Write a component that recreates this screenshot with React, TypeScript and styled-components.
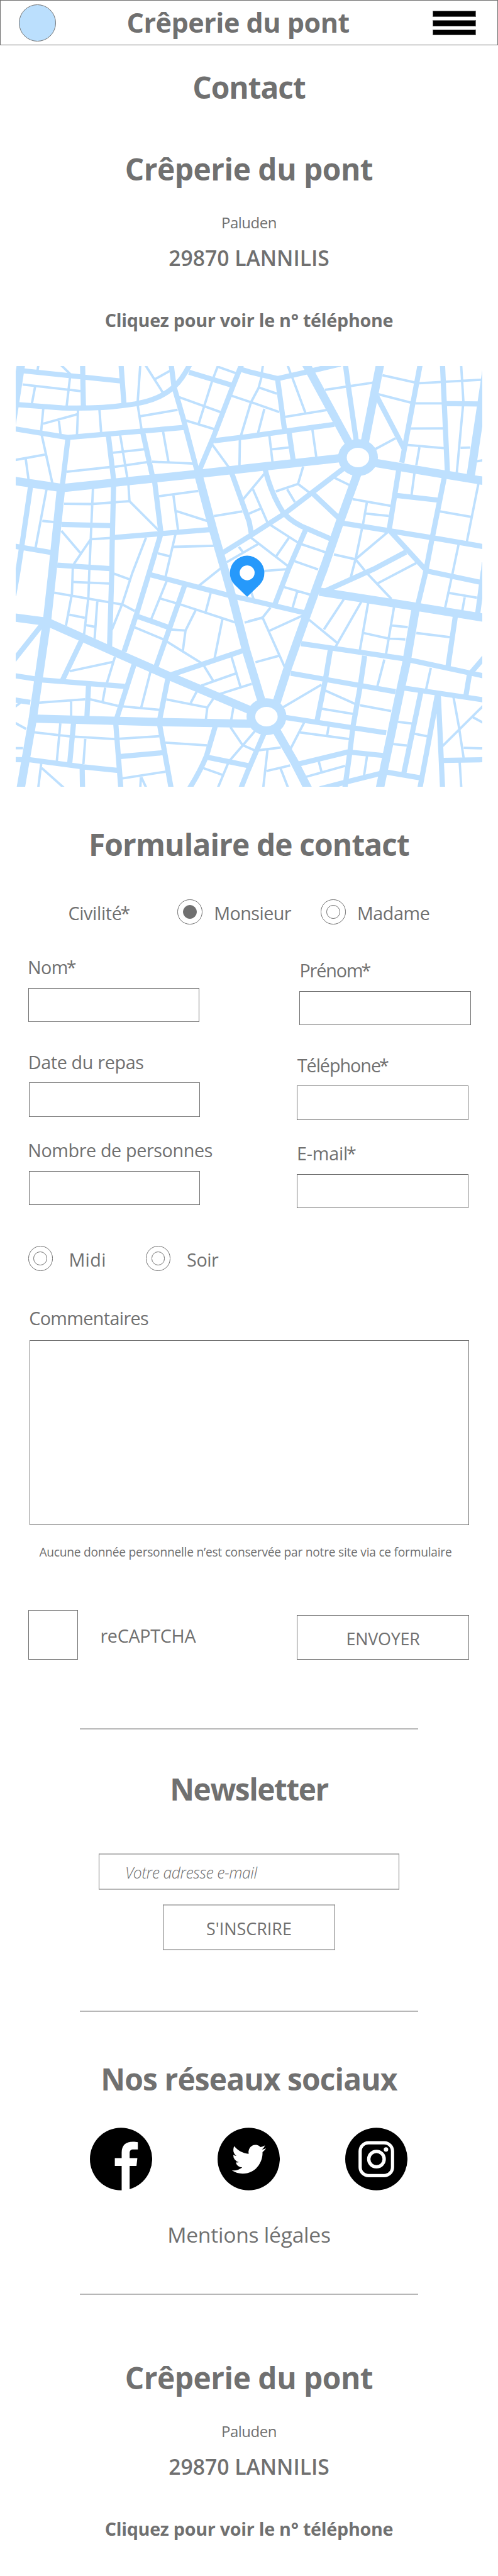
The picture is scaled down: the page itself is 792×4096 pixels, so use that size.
import React from "react";
import styled, { createGlobalStyle, css } from "styled-components";

const GREY = "#707070";
const LIGHT = "#b7b7b7";
const STREET = "#bee0fe";

const GlobalStyle = createGlobalStyle`
  *, *::before, *::after { box-sizing: border-box; }
  html, body { margin: 0; padding: 0; background: #fff; overflow: hidden; }
`;

const Page = styled.div`
  zoom: 0.9903;
  width: 799.7px;
  height: 4136px;
  display: flex;
  flex-direction: column;
  background: #fff;
  color: ${GREY};
  font-family: "Open Sans", "Noto Sans", sans-serif;
  white-space: nowrap;
`;

/* ---------- header ---------- */

const Header = styled.header`
  height: 73px;
  flex: none;
  border: 1px solid ${GREY};
  padding: 1px 34px 0 29px;
  display: flex;
  align-items: center;
  justify-content: space-between;
`;

const Logo = styled.div`
  width: 60px;
  height: 60px;
  border-radius: 50%;
  border: 1px solid ${GREY};
  background: #bbdffd;
`;

const Brand = styled.h1`
  margin: -1px 20px 0 0;
  font-size: 43.5px;
  line-height: 60px;
  font-weight: 700;
  letter-spacing: -0.49px;
`;

const Burger = styled.div`
  width: 70px;
  display: flex;
  flex-direction: column;
  gap: 5px;
`;

const BurgerBar = styled.span`
  height: 10px;
  background: #000;
  border: 1px solid ${GREY};
`;

/* ---------- typography ---------- */

type Spaced = { $top?: number; $track?: number };

const spaced = css<Spaced>`
  margin: ${(p) => p.$top ?? 0}px 0 -0.7px;
  padding-top: 0.7px;
  letter-spacing: ${(p) => p.$track ?? 0}px;
`;

const Heading = styled.h2<Spaced>`
  ${spaced}
  font-size: 48.3px;
  line-height: 60px;
  font-weight: 700;
  text-align: center;
`;

const Place = styled.p<Spaced>`
  ${spaced}
  font-size: 24.2px;
  line-height: 34px;
  text-align: center;
`;

const City = styled.p<Spaced>`
  ${spaced}
  font-size: 34px;
  line-height: 48px;
  font-weight: 600;
  text-align: center;
`;

const Phone = styled.p<Spaced>`
  ${spaced}
  font-size: 29px;
  line-height: 40px;
  font-weight: 700;
  text-align: center;
`;

const Legal = styled.p<Spaced>`
  ${spaced}
  font-size: 34px;
  line-height: 48px;
  text-align: center;
`;

const Notice = styled.p<Spaced>`
  ${spaced}
  padding-left: 63px;
  font-size: 19.4px;
  line-height: 28px;
`;

const Label = styled.label<Spaced & { $shift?: number }>`
  ${spaced}
  display: block;
  margin-left: ${(p) => (p.$shift ?? 0) + 1}px;
  font-size: 29px;
  line-height: 40px;
`;

const Star = styled.span`
  margin-left: -2px;
`;

const Divider = styled.hr<{ $top: number }>`
  width: 543px;
  height: 2px;
  flex: none;
  border: 0;
  margin: ${(p) => p.$top}px auto 0;
  background: ${LIGHT};
`;

/* ---------- map ---------- */

const MapFrame = styled.div`
  margin: 55.3px 25px 0;
  height: 675px;
  svg { display: block; width: 750px; height: 675px; }
`;

/* ---------- form ---------- */

const RadioRow = styled.div<{ $columns: string; $left: number; $top: number }>`
  margin-top: ${(p) => p.$top}px;
  padding-left: ${(p) => p.$left}px;
  height: 40px;
  display: grid;
  grid-template-columns: ${(p) => p.$columns};
`;

const Radio = styled.span`
  width: 40px;
  height: 40px;
  border: 1px solid ${GREY};
  border-radius: 50%;
  display: flex;
  align-items: center;
  justify-content: center;
`;

const RadioDot = styled.span<{ $on?: boolean }>`
  width: 22px;
  height: 22px;
  border: 1px solid ${GREY};
  border-radius: 50%;
  background: ${(p) => (p.$on ? GREY : "transparent")};
`;

const Fields = styled.div`
  margin-top: 48.4px;
  padding-left: 45px;
  display: grid;
  grid-template-columns: 432px 280px;
`;

const FieldColumn = styled.div<{ $top?: number }>`
  padding-top: ${(p) => p.$top ?? 0}px;
  display: flex;
  flex-direction: column;
`;

const Field = styled.div<{ $top?: number; $left?: number }>`
  margin: ${(p) => p.$top ?? 0}px 0 0 ${(p) => p.$left ?? 0}px;
  display: flex;
  flex-direction: column;
  gap: 13.6px;
`;

const TextBox = styled.div`
  width: 275px;
  height: 55px;
  border: 1px solid ${GREY};
`;

const CommentLabel = styled(Label)`
  margin: 54.7px 0 -0.7px 46.6px;
`;

const CommentBox = styled.div`
  flex: none;
  width: 706px;
  height: 297px;
  margin: 16.3px 0 0 47px;
  border: 1px solid ${GREY};
`;

const SubmitRow = styled.div`
  margin-top: 79.5px;
  padding: 0 46.7px 0 45px;
  height: 80px;
  display: flex;
  align-items: center;
`;

const CaptchaBox = styled.div`
  width: 80px;
  height: 80px;
  margin-right: 35px;
  border: 1px solid ${GREY};
`;

const Button = styled.button<{ $soft?: boolean; $track?: number }>`
  width: 276px;
  height: ${(p) => (p.$soft ? 73 : 72)}px;
  flex: none;
  padding: ${(p) => (p.$soft ? 5 : 4)}px 0 0;
  background: #fff;
  border: 1px solid ${GREY};
  ${(p) =>
    p.$soft &&
    css`
      border-top: 2.1px solid ${LIGHT};
      border-bottom: 2.1px solid ${LIGHT};
    `}
  color: ${GREY};
  font-family: inherit;
  font-size: 27.2px;
  line-height: 38px;
  letter-spacing: ${(p) => p.$track ?? 0}px;
`;

const Submit = styled(Button)`
  margin-left: auto;
  align-self: flex-end;
`;

const Newsletter = styled.div`
  margin-top: 74px;
  display: flex;
  flex-direction: column;
  align-items: center;
  gap: 24px;
`;

const MailBox = styled.div`
  width: 482px;
  height: 58px;
  padding: 4px 0 0 41px;
  display: flex;
  align-items: center;
  border: 1px solid ${GREY};
  border-top: 2.1px solid ${LIGHT};
  border-bottom: 2.1px solid ${LIGHT};
  font-size: 25px;
  line-height: 34px;
  font-style: italic;
  font-weight: 300;
  letter-spacing: -0.45px;
`;

const Socials = styled.div`
  margin-top: 48.2px;
  display: flex;
  justify-content: center;
  gap: 105px;
  svg { display: block; width: 100px; height: 101px; }
`;

/* ---------- map data: one list of streets per width, in four sheets ---------- */

type Sheet = { x: number; y: number; avenues: string; streets: string; lanes: string };

const sheets: Sheet[] = [
  {
    x: 0,
    y: 0,
    avenues:
      "M103 30L54 345 M60 606L300 642L950 574L1200 546L1700 491 M294 635L253 1035L227 1270L157 1755L97 2099 M950 560L960 595L1028 850L1083 1040L1119 1170L1184 1420L1257 1660L1283 1740",
    streets:
      "M100 76L580 126 M397 40L401 250 M582 40L597 245 M85 240L300 256Q480 260 600 243Q760 228 840 152Q880 115 917 40 M823 40L838 155L880 300L950 565 M60 355L325 398L885 350 M327 400L299 635 M521 385L547 605L540 900L538 1040L527 1410 M685 365L736 595 M743 600L775 860 M295 817L535 823 M550 880L1020 841 M775 860L712 1070L657 1250L597 1430 M147 630L103 930L83 1060L65 1160 M60 920L250 953 M275 1013L530 1030 M910 84L1115 146 M1162 50L1120 155L1026 400L958 560 M1160 70L1200 82L1337 115L1480 82L1640 44 M1337 120L1370 360L1392 372L1412 510 M1030 414L1200 393L1380 367L1610 335 M1114 565L1200 805L1210 860",
    lanes:
      "M184 50L180 75 M292 48L338 93 M108 143L387 175 M168 155L153 235 M337 105L320 250 M208 255L197 375 M207 332L370 287 M283 318L291 385 M375 265L370 390 M478 260L487 380 M70 507L215 481 M123 500L137 602 M200 385L253 625 M675 50L662 235 M663 245L683 370 M700 50L787 187 M745 118L818 77 M675 296L855 265 M860 203L1065 277 M1048 56L1020 130L957 330 M890 315L1032 358 M1045 56L1137 89 M1115 197L1210 229 M1261 100L1245 160L1208 230L1160 390 M578 385L613 595 M543 472L695 455 M551 540L712 516 M320 563L528 541 M784 365L812 522 M732 515L930 524 M223 650L170 932 M203 800L262 806 M447 645L430 1035 M308 718L440 719L623 705 M618 625L623 705L768 850 M437 888L532 882 M295 848L385 953 M435 890L355 1008 M350 1025L346 1150L317 1305 M430 1030L425 1170L404 1350 M765 681L955 656 M835 678L857 845 M850 753L1000 801 M703 880L637 1050L590 1195L538 1325 M845 862L797 1068 M760 956L815 970 M835 925L1032 920 M1030 777L1167 754 M1150 925L1175 957 M1092 999L1245 910 M1067 1025L957 1113 M1170 697L1277 568 M1020 430L1102 542 M1155 405L1153 535",
  },
  {
    x: 1200,
    y: 0,
    avenues:
      "M272 42L480 425L510 480 M633 34L557 420L525 490 M523 506L615 522L1145 610 M522 570L442 790L352 1050L362 1020L278 1250L185 1510L130 1680L95 1750 M1146 54L1066 590",
    streets:
      "M463 44L478 155L518 430 M824 44L735 520 M721 550L674 845 M614 200L746 452 M931 44L955 570 M935 235L1115 237 M940 590L882 880L847 1060L812 1205 M705 677L910 700 M450 811L870 879L1135 925 M678 848L845 1030 M75 545Q105 670 165 762Q215 815 285 840L395 888 M455 547L170 765L10 868L-125 952 M300 662L430 785 M272 842L190 1030L120 1212 M352 1144L600 1032L755 950",
    lanes:
      "M66 50L60 92 M185 50L200 92 M207 108L270 278 M45 157L133 187 M10 228L145 276 M73 260L42 378 M172 299L375 266 M97 388L112 515 M110 455L190 447 M304 358L323 492 M365 169L598 134 M642 98L798 133 M622 190L778 230 M608 454L705 402 M818 137L1118 120 M1021 50L1032 228 M800 234L930 234 M1030 245L1000 568 M778 355L934 354 M760 434L938 450 M820 445L805 532 M1018 448L1065 447 M1096 513L1130 507 M796 570L782 675 M260 538L235 622L292 665 M128 658L235 622 M183 648L220 710 M408 591L482 627 M18 648L88 808 M-5 767L57 740 M498 695L682 728 M567 710L548 818 M563 765L672 776 M918 754L1070 781 M1104 622L1048 903 M1009 912L980 1050L944 1217 M543 838L512 985L486 1085 M665 856L512 985 M408 962L512 985L570 1055L685 1176 M617 1102L805 1003 M103 820L237 906 M190 883L130 970 M248 911L367 951 M8 880L188 1019 M218 994L332 1034 M68 1041L182 1033 M1120 1072L1126 1000",
  },
  {
    x: 0,
    y: 1020,
    avenues:
      "M60 244L225 266L575 422L820 530L1200 690L1290 735 M150 732L770 749L1200 757L1283 752",
    streets:
      "M720 38L1100 138L1200 160L1465 222 M891 85L750 485 M662 240L812 293 M810 526L1178 402 M207 273L60 458 M390 360L300 548 M60 524L200 546L600 577 M60 641L145 654 M426 570L418 725 M645 472L562 730 M809 535L768 740 M557 755L582 1075 M768 760L825 1075 M354 750L335 950 M60 930L145 931L400 965L570 982 M395 965L397 1075 M580 915L788 896 M1036 770L995 910Q965 985 908 1075 M995 918L1200 960 M1273 800L1193 985L1155 1080",
    lanes:
      "M548 34L622 61 M352 74L525 82 M260 126L590 183L648 214 M468 168L455 348 M333 232L408 247 M411 282L456 290 M803 68L728 253 M772 154L870 183L1132 269 M1014 128L990 220 M941 212L893 308L880 408 M822 303L893 308 M1071 252L1033 442 M648 293L785 350L970 465 M335 504L545 459 M553 435L514 562 M506 583L494 650 M433 639L567 671 M185 656L410 639 M342 648L342 720 M588 673L767 690 M725 503L680 678 M801 640L998 679L991 738 M947 602L918 657 M1026 638L998 679 M1124 678L1113 740 M982 478L1027 552 M968 574L1135 515 M1114 432L1157 577 M1058 614L1212 565 M1178 270L1262 247 M70 752L125 782 M70 875L110 875 M70 676L97 656 M163 798L335 818L550 831L767 817 M290 755L273 938 M410 830L401 952 M198 948L183 1070 M200 970L312 1070 M590 1020L797 988 M678 1015L675 1070 M680 1015L706 1070 M796 848L997 861 M976 970L1070 1003 M1098 948L1045 1075 M1109 773L1168 860L1225 885 M1108 932L1168 862L1228 792",
  },
  {
    x: 1200,
    y: 1020,
    avenues:
      "M338 121L780 190L1140 248 M804 190L756 470L723 620L628 1075 M125 780L217 940L286 1075",
    streets:
      "M850 20L1120 77 M1128 20L1101 225 M250 371L740 443L1140 529 M993 240L957 487 M200 514L705 603 M745 585L1140 644 M391 400L367 545L327 742 M556 430L535 575L500 770L484 900L459 1080 M175 727L660 801 M235 952L475 893L645 910 M340 1071L475 1036L630 997 M660 990L825 1018 M826 608L745 995 M906 620L821 1075 M911 620L932 1080 M935 934L1140 930 M1061 520L1044 622 M1068 512L1140 428",
    lanes:
      "M-5 264L65 245L102 198 M63 243L170 482 M98 309L258 236 M30 461L142 430 M8 118L21 157 M168 99L292 135 M231 122L209 198 M456 157L360 303 M541 168L415 388 M288 256L422 366 M573 175L532 408 M698 193L658 428 M551 320L665 345L752 351 M688 284L764 292 M805 320L967 340 M963 127L1097 150 M1038 148L1026 216 M651 448L617 578 M875 488L852 592 M348 569L163 678 M363 596L512 662 M533 668L684 696 M348 685L500 710 M716 748L784 756 M693 855L760 862 M795 805L860 818 M984 628L1010 770L1033 922 M932 864L1130 668 M1078 726L1130 754 M1033 873L1130 876 M1014 942L1022 1070 M568 910L553 1008 M266 748L198 880 M245 799L482 831 M383 768L375 814 M43 885L152 872 M88 883L67 1070 M83 985L197 958 M150 970L189 1070 M335 938L348 988 M273 1013L462 960",
  },
];

function StreetMap() {
  return (
    <svg viewBox="75 54 2250 2025" preserveAspectRatio="none">
      <g fill="none" stroke={STREET}>
        {sheets.map((s) => (
          <g key={`${s.x}-${s.y}`} transform={`translate(${s.x} ${s.y})`}>
            <path d={s.avenues} strokeWidth="40" />
            <path d={s.streets} strokeWidth="25" />
            <path d={s.lanes} strokeWidth="11.5" />
          </g>
        ))}
        <ellipse cx="1724" cy="495" rx="75" ry="68" strokeWidth="42" fill="#fff" />
        <ellipse cx="1283" cy="1743" rx="75" ry="68" strokeWidth="42" fill="#fff" />
      </g>
      <path
        fill="#2699fb"
        fillRule="evenodd"
        d="M1190 1166L1129 1107A83 83 0 1 1 1251 1107ZM1190 1014a36 36 0 1 0 0.1 0Z"
      />
    </svg>
  );
}

function Facebook() {
  return (
    <svg viewBox="0 0 100 101">
      <ellipse cx="50" cy="50.5" rx="50" ry="50.3" fill="#000" />
      <path
        fill="#fff"
        d="M51 101V61.7H40V49H51V40C51 28 58 22.7 69 22.7C72 22.7 75 23 77 23.4V35H70C65.5 35 63.8 37 63.8 41V49H76.2L74.8 61.7H63.8V101Z"
      />
    </svg>
  );
}

function Twitter() {
  return (
    <svg viewBox="0 0 100 101">
      <ellipse cx="50" cy="50.5" rx="50" ry="50.3" fill="#000" />
      <path
        fill="#fff"
        transform="translate(23.1 22.4) scale(2.28 2.37)"
        d="M23.953 4.57a10 10 0 01-2.825.775 4.958 4.958 0 002.163-2.723c-.951.555-2.005.959-3.127 1.184a4.92 4.92 0 00-8.384 4.482C7.69 8.095 4.067 6.13 1.64 3.162a4.822 4.822 0 00-.666 2.475c0 1.71.87 3.213 2.188 4.096a4.904 4.904 0 01-2.228-.616v.06a4.923 4.923 0 003.946 4.827 4.996 4.996 0 01-2.212.085 4.936 4.936 0 004.604 3.417 9.867 9.867 0 01-6.102 2.105c-.39 0-.779-.023-1.17-.067a13.995 13.995 0 007.557 2.209c9.053 0 13.998-7.496 13.998-13.985 0-.21 0-.42-.015-.63A9.935 9.935 0 0024 4.59z"
      />
    </svg>
  );
}

function Instagram() {
  return (
    <svg viewBox="0 0 100 101">
      <ellipse cx="50" cy="50.5" rx="50" ry="50.3" fill="#000" />
      <rect x="24" y="24.3" width="52" height="52.8" rx="13.5" fill="none" stroke="#fff" strokeWidth="5.2" />
      <circle cx="50.2" cy="50.6" r="12.4" fill="none" stroke="#fff" strokeWidth="5.4" />
      <circle cx="65.5" cy="35.2" r="3.6" fill="#fff" />
    </svg>
  );
}

function Address({ top }: { top: number }) {
  return (
    <>
      <Heading $top={top} $track={-0.5}>Crêperie du pont</Heading>
      <Place $top={38.8} $track={-0.5}>Paluden</Place>
      <City $top={15.9}>29870 LANNILIS</City>
      <Phone $top={55.2} $track={-0.27}>Cliquez pour voir le n° téléphone</Phone>
    </>
  );
}

function Choice({ on }: { on?: boolean }) {
  return (
    <Radio>
      <RadioDot $on={on} />
    </Radio>
  );
}

export default function App() {
  return (
    <Page>
      <GlobalStyle />
      <Header>
        <Logo />
        <Brand>Crêperie du pont</Brand>
        <Burger>
          <BurgerBar />
          <BurgerBar />
          <BurgerBar />
        </Burger>
      </Header>

      <Heading $top={36.6} $track={-1.03}>Contact</Heading>
      <Address top={71.4} />

      <MapFrame>
        <StreetMap />
      </MapFrame>

      <Heading $top={62.5} $track={-0.87}>Formulaire de contact</Heading>
      <RadioRow $top={58.5} $left={108.5} $columns="176.5px 57.5px 172.5px 57.5px auto">
        <Label $top={1} $track={-0.33}>Civilité<Star>*</Star></Label>
        <Choice on />
        <Label $top={1} $track={-0.52}>Monsieur</Label>
        <Choice />
        <Label $top={1} $track={-0.4}>Madame</Label>
      </RadioRow>

      <Fields>
        <FieldColumn>
          <Field>
            <Label $shift={-1.5} $track={-0.6}>Nom<Star>*</Star></Label>
            <TextBox />
          </Field>
          <Field $top={43.4} $left={1}>
            <Label $shift={-1.9} $track={-0.33}>Date du repas</Label>
            <TextBox />
          </Field>
          <Field $top={33.3} $left={1}>
            <Label $shift={-2.4} $track={-0.37}>Nombre de personnes</Label>
            <TextBox />
          </Field>
        </FieldColumn>
        <FieldColumn $top={5}>
          <Field $left={4}>
            <Label $shift={-0.9} $track={-1.1}>Prénom<Star>*</Star></Label>
            <TextBox />
          </Field>
          <Field $top={43.4}>
            <Label $shift={-0.6} $track={-1.03}>Téléphone<Star>*</Star></Label>
            <TextBox />
          </Field>
          <Field $top={33.3}>
            <Label $shift={-1.3} $track={-0.2}>E-mail<Star>*</Star></Label>
            <TextBox />
          </Field>
        </FieldColumn>
      </Fields>

      <RadioRow $top={61} $left={45} $columns="64.5px 124.5px 65px auto">
        <Choice />
        <Label $top={0.5} $track={0.4}>Midi</Label>
        <Choice />
        <Label $top={0.5} $track={-0.4}>Soir</Label>
      </RadioRow>

      <CommentLabel $track={-0.6}>Commentaires</CommentLabel>
      <CommentBox />
      <Notice $top={28.5} $track={-0.26}>
        Aucune donnée personnelle n’est conservée par notre site via ce formulaire
      </Notice>

      <SubmitRow>
        <CaptchaBox />
        <Label $top={1} $track={-0.3}>reCAPTCHA</Label>
        <Submit $track={-0.25}>ENVOYER</Submit>
      </SubmitRow>

      <Divider $top={110.2} />
      <Heading $top={65} $track={-1.48}>Newsletter</Heading>
      <Newsletter>
        <MailBox>Votre adresse e-mail</MailBox>
        <Button $soft>S'INSCRIRE</Button>
      </Newsletter>

      <Divider $top={97.2} />
      <Heading $top={77.6} $track={-0.87}>Nos réseaux sociaux</Heading>
      <Socials>
        <Facebook />
        <Twitter />
        <Instagram />
      </Socials>
      <Legal $top={47.4} $track={-0.26}>Mentions légales</Legal>

      <Divider $top={70.6} />
      <Address top={102.5} />
    </Page>
  );
}
